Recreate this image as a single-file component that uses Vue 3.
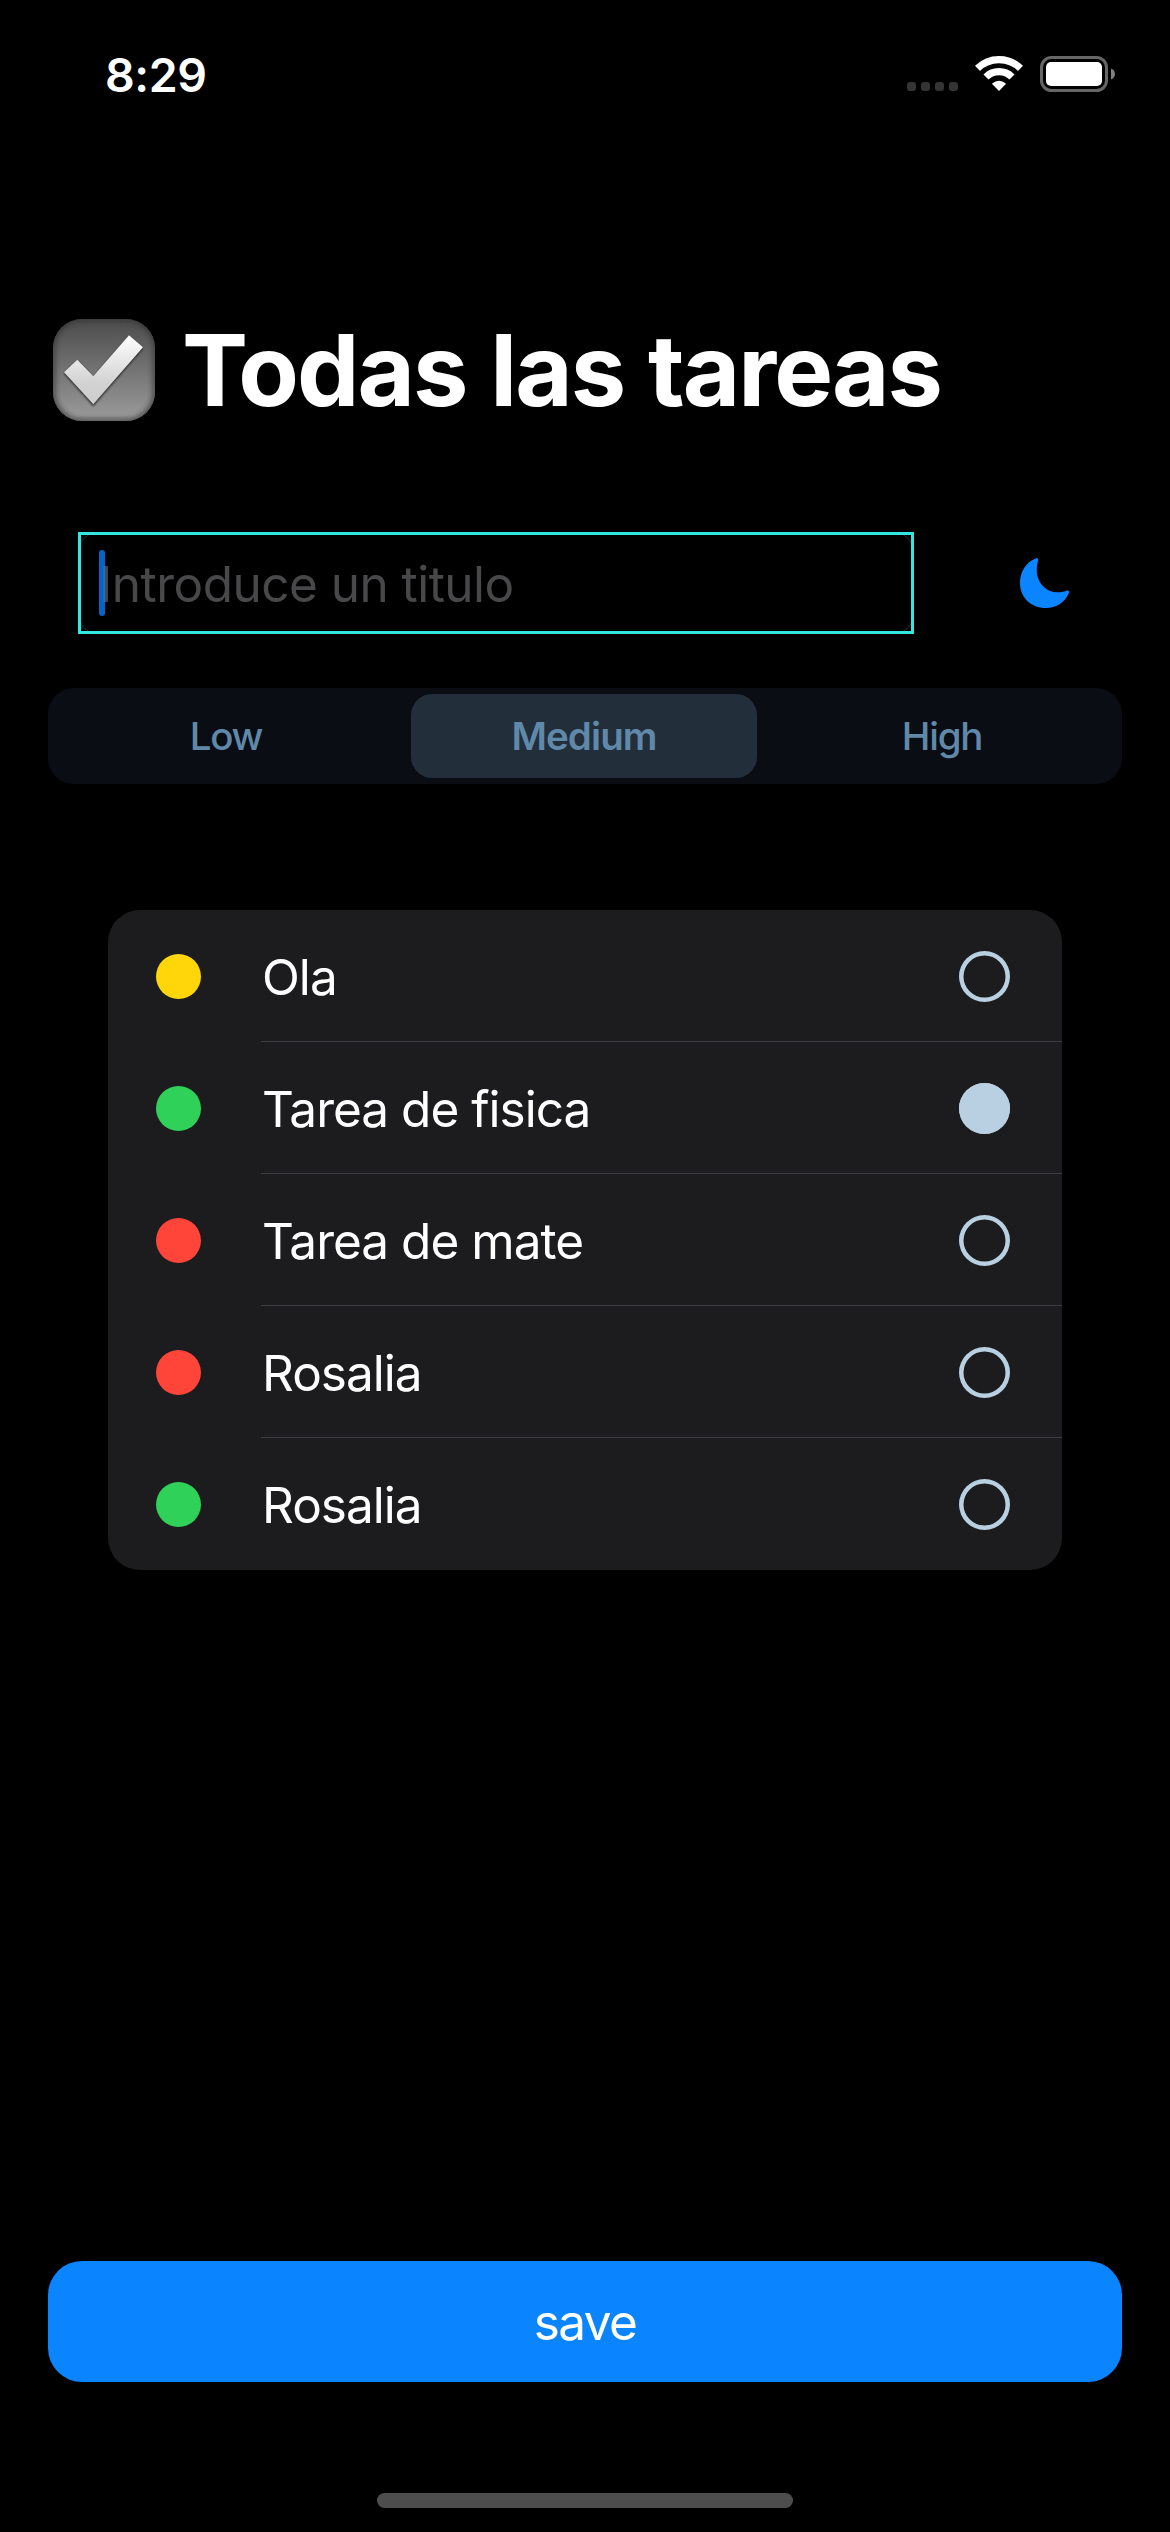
<script setup>
import { ref } from 'vue'

const title = ref('')
const priorities = ['Low', 'Medium', 'High']
const selected = ref('Medium')
const tasks = ref([
  { id: 1, name: 'Ola', level: 'medium', done: false },
  { id: 2, name: 'Tarea de fisica', level: 'low', done: true },
  { id: 3, name: 'Tarea de mate', level: 'high', done: false },
  { id: 4, name: 'Rosalia', level: 'high', done: false },
  { id: 5, name: 'Rosalia', level: 'low', done: false },
])
</script>

<template>
  <main class="screen">
    <header class="status">
      <span class="time">8:29</span>
      <div class="indicators">
        <div class="signal"><i v-for="n in 4" :key="n"></i></div>
        <svg class="wifi" width="48" height="36" viewBox="0 0 48 36">
          <g fill="none" stroke="#fff" stroke-width="7.2">
            <path d="M2.5 13.3 A31 31 0 0 1 45.5 13.3" />
            <path d="M11 22 A18.5 18.5 0 0 1 37 22" />
          </g>
          <path d="M24 36 L16.9 28.8 Q24 22.8 31.1 28.8 Z" fill="#fff" />
        </svg>
        <svg class="battery" width="75" height="36" viewBox="0 0 75 36">
          <rect x="1.5" y="1.5" width="65" height="33" rx="10" fill="none" stroke="#666" stroke-width="3" />
          <rect x="6" y="6" width="56" height="24" rx="5" fill="#fff" />
          <path d="M71 12.5 C73.8 13.7 75 15.8 75 18 C75 20.2 73.8 22.3 71 23.5 Z" fill="#808080" />
        </svg>
      </div>
    </header>

    <h1 class="heading">
      <svg class="emoji" width="102" height="102" viewBox="0 0 102 102">
        <defs>
          <linearGradient id="box" x1="0" y1="0" x2="0" y2="1">
            <stop offset="0" stop-color="#4b4b4b" />
            <stop offset="1" stop-color="#9c9c9c" />
          </linearGradient>
          <linearGradient id="tick" x1="0" y1="0" x2="0" y2="1">
            <stop offset="0" stop-color="#fff" />
            <stop offset="0.7" stop-color="#d2d2d2" />
            <stop offset="1" stop-color="#cecece" />
          </linearGradient>
          <filter id="soft" x="-20%" y="-20%" width="140%" height="140%"><feGaussianBlur stdDeviation="2.5" /></filter>
          <filter id="shade" x="-20%" y="-20%" width="140%" height="140%"><feGaussianBlur stdDeviation="1.3" /></filter>
          <clipPath id="edge"><rect width="102" height="102" rx="29" /></clipPath>
        </defs>
        <g clip-path="url(#edge)">
          <rect width="102" height="102" fill="url(#box)" />
          <rect width="102" height="102" rx="29" fill="none" stroke="#333" stroke-opacity="0.75" stroke-width="5" filter="url(#soft)" />
          <path d="M11 54.5 L24.3 42 L40.3 58.5 L76 17.5 L90 29.5 L40.3 87 Z" fill="#222" filter="url(#shade)" />
          <path d="M11 53.3 L24.3 40.7 L40.3 57.3 L76 16.3 L90 28.3 L40.3 85.3 Z" fill="url(#tick)" />
        </g>
      </svg>
      <span class="heading-text">Todas las tareas</span>
    </h1>

    <section class="entry">
      <div class="field">
        <span class="placeholder">{{ title || 'Introduce un titulo' }}</span>
        <span class="caret"></span>
      </div>
      <svg class="moon" width="50" height="50" viewBox="0 0 50 50">
        <path d="M15.5 0.6 C17.6 -0.2 18.7 0.9 18.1 2.8 C16.5 8 16.2 15.5 18.1 20.2 C21.2 28.5 28.3 34 37 34.2 C40.4 34.3 43.8 33.7 46.6 32.7 C48.5 32.1 49.6 33.3 48.8 35.2 C44.8 44.5 36 50 26 50 C11 50 0 39.5 0 25 C0 14 6 4.4 15.5 0.6 Z" fill="#0a84ff" />
      </svg>
    </section>

    <nav class="segments">
      <button
        v-for="p in priorities"
        :key="p"
        class="segment"
        :class="{ active: selected === p }"
        @click="selected = p"
      >{{ p }}</button>
    </nav>

    <ul class="tasks">
      <li v-for="task in tasks" :key="task.id" class="task">
        <span class="dot" :class="task.level"></span>
        <div class="body">
          <span class="name">{{ task.name }}</span>
          <span class="check" :class="{ done: task.done }" @click="task.done = !task.done"></span>
        </div>
      </li>
    </ul>

    <footer class="footer">
      <button class="save">save</button>
      <div class="home"></div>
    </footer>
  </main>
</template>

<style>
body {
  background: #000;
}
</style>

<style scoped>
.screen {
  box-sizing: border-box;
  width: 1170px;
  height: 2532px;
  display: flex;
  flex-direction: column;
  overflow: hidden;
  background: #000;
  color: #fff;
  font-family: Inter, "Liberation Sans", sans-serif;
  white-space: nowrap;
}
button {
  margin: 0;
  padding: 0;
  border: 0;
  font-family: inherit;
}
.status {
  box-sizing: border-box;
  height: 150px;
  padding: 0 55px 0 105px;
  display: flex;
  justify-content: space-between;
  align-items: center;
}
.time {
  font-size: 46.5px;
  font-weight: 600;
  letter-spacing: -0.4px;
}
.indicators {
  display: flex;
  align-items: flex-start;
  height: 38px;
}
.signal {
  display: flex;
  gap: 5px;
  padding: 26px 17px 0 0;
}
.signal i {
  width: 9px;
  height: 9px;
  border-radius: 3px;
  background: #343434;
}
.wifi {
  margin: -1px 17px 0 0;
}
.heading {
  margin: 169px 0 0 53px;
  height: 102px;
  display: flex;
  align-items: center;
  gap: 27px;
}
.heading-text {
  font-size: 99px;
  font-weight: 700;
  line-height: 102px;
  letter-spacing: -2px;
  word-spacing: 2.5px;
}
.entry {
  display: flex;
  align-items: center;
  margin: 111px 0 0 78px;
  gap: 106px;
}
.field {
  position: relative;
  box-sizing: border-box;
  width: 836px;
  height: 102px;
  padding: 2px 0 0 21px;
  display: flex;
  align-items: center;
}
.field::before {
  content: "";
  position: absolute;
  inset: 1px;
  border: 1px solid #2c2c2e;
  border-radius: 16px;
}
.field::after {
  content: "";
  position: absolute;
  inset: 0;
  border: 3px solid #32e6e2;
}
.placeholder {
  font-size: 49.5px;
  letter-spacing: -0.52px;
  color: #48484a;
}
.caret {
  position: absolute;
  left: 21px;
  top: 18px;
  width: 6px;
  height: 66px;
  border-radius: 3px;
  background: rgba(10, 125, 245, 0.8);
}
.segments {
  margin: 54px 48px 0;
  height: 96px;
  display: grid;
  grid-template-columns: repeat(3, 1fr);
  border-radius: 26px;
  background: #0a0d14;
}
.segment {
  margin: 6px 7px 6px 5px;
  background: none;
  border-radius: 21px;
  color: #6089a9;
  font-size: 38.5px;
  font-weight: 500;
  letter-spacing: -1.2px;
}
.segment.active {
  background: #222e3a;
  font-weight: 600;
  letter-spacing: -0.9px;
}
.tasks {
  list-style: none;
  margin: 126px 108px 0;
  padding: 0;
  border-radius: 32px;
  background: #1c1c1e;
}
.task {
  display: flex;
  align-items: center;
  height: 132px;
  padding-left: 48px;
}
.dot {
  width: 45px;
  height: 45px;
  border-radius: 50%;
}
.dot.low {
  background: #30d158;
}
.dot.medium {
  background: #ffd60a;
}
.dot.high {
  background: #ff453a;
}
.body {
  box-sizing: border-box;
  flex: 1;
  height: 132px;
  margin-left: 60px;
  padding: 1px 52px 0 1px;
  display: flex;
  align-items: center;
  justify-content: space-between;
  border-bottom: 1px solid #3d3d41;
}
.task:last-child .body {
  border-bottom-color: transparent;
}
.name {
  padding-top: 2px;
  font-size: 49.5px;
  letter-spacing: -0.98px;
}
.check {
  width: 51px;
  height: 51px;
  border-radius: 50%;
  box-shadow: inset 0 0 0 4.5px #b8d0e1;
}
.check.done {
  background: #b8d0e1;
}
.footer {
  margin-top: auto;
  padding: 0 48px 24px;
  display: flex;
  flex-direction: column;
  align-items: center;
  gap: 111px;
}
.save {
  width: 100%;
  height: 121px;
  border-radius: 34px;
  background: #0a84ff;
  color: #fff;
  font-size: 49.5px;
  letter-spacing: -1.6px;
}
.home {
  width: 416px;
  height: 15px;
  border-radius: 8px;
  background: #4d4d4d;
}
</style>
